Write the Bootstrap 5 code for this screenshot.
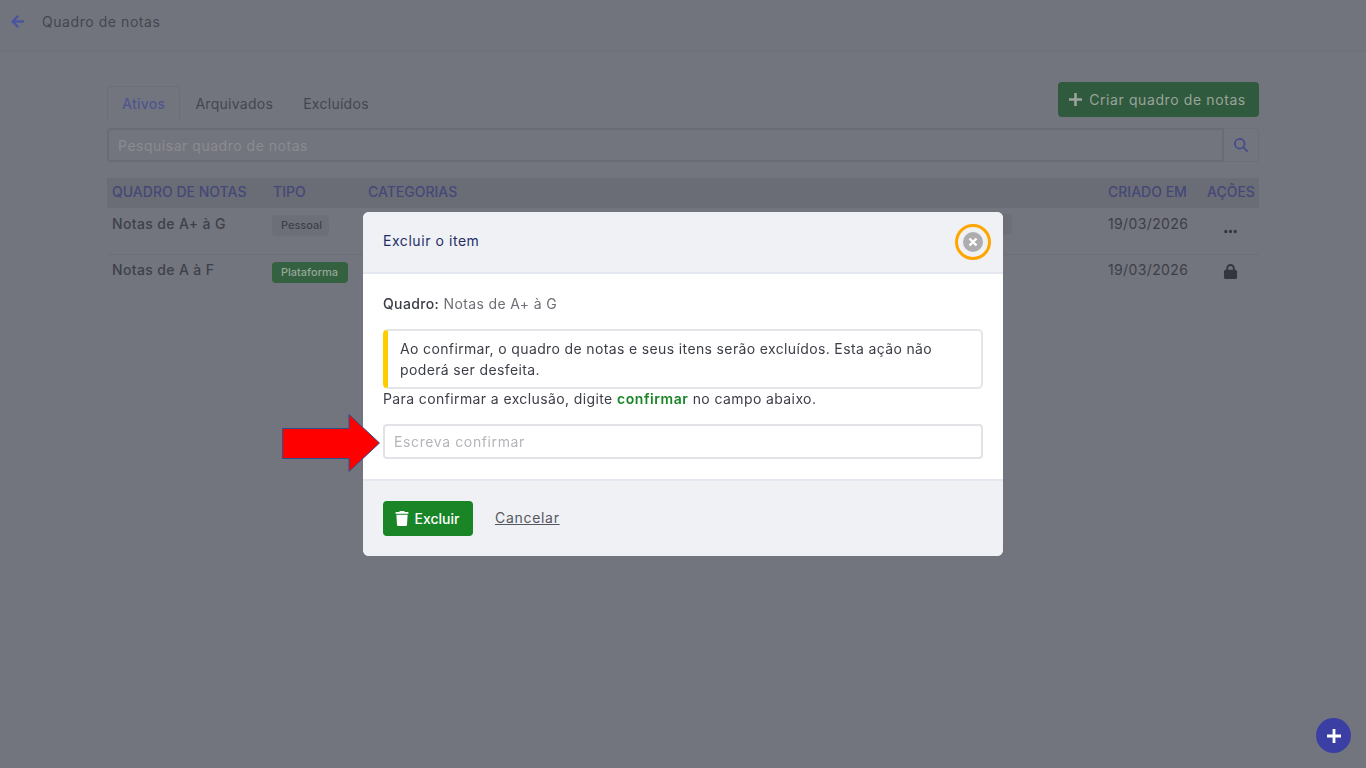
<!DOCTYPE html>
<html lang="pt-BR">
<head>
<meta charset="utf-8">
<title>Quadro de notas</title>
<link href="https://cdn.jsdelivr.net/npm/bootstrap@5.3.0/dist/css/bootstrap.min.css" rel="stylesheet">
<style>
    html, body { height: 100%; overflow: hidden; }
    body { background: #73757e; font-family: Inter, "Noto Sans", sans-serif; font-size: 14px; color: #3c3e48; letter-spacing: .026em; }
    .top-bar { height: 50px; padding: 0 0 8px 11px; gap: 18px; background: #72747d; box-shadow: 0 1px 3px rgba(0,0,0,.06); color: #44464f; letter-spacing: .04em; }
    .top-bar svg { width: 13px; height: 13px; fill: #4a55a0; }
    .board-wrap { width: 1152px; margin: 0 auto; }
    .tabs-row { padding-top: 32px; height: 78px; }
    .tab-items .nav-link { color: #44464f; height: 36px; padding: 6px 14px 0; margin: 4px 0 0; border: 1px solid transparent; border-bottom: 0; border-radius: 4px 4px 0 0; letter-spacing: .02em; }
    .tab-items .nav-link.active { color: #4f568f; background: transparent; border-color: #6d6f78; font-weight: 500; }
    .add-board, .add-board:hover { width: 201px; height: 35px; background: #305a3d; color: #9aa39c; border: 0; border-radius: 4px; font-size: 14px; gap: 7px; padding: 0 2px 0 0; letter-spacing: .043em; }
    .add-board svg { width: 13px; height: 13px; fill: #9aa39c; }
    .search-box { height: 34px; }
    .search-field { flex: 1; border: 2px solid #6a6c75; border-radius: 4px 0 0 4px; padding-left: 9px; color: #8a8b90; letter-spacing: .037em; }
    .search-btn { width: 35px; border: 1px solid #6d6f78; border-left: 0; border-radius: 0 4px 4px 0; }
    .search-btn svg { width: 14px; height: 14px; fill: #454c8c; }
    .board-table { margin-top: 16px; width: 1152px; table-layout: fixed; border-collapse: collapse; }
    .board-table th { height: 30px; padding: 0 5px 3px; background: #6b6d76; color: #444877; font-weight: 500; white-space: nowrap; letter-spacing: 0; }
    .board-table td { padding: 5px 5px 0; vertical-align: top; white-space: nowrap; overflow: visible; }
    .board-table .row-b td { padding-top: 4px; }
    .row-a { height: 46px; border-bottom: 1px solid #6d6f78; }
    .row-b { height: 31px; }
    .board-name { font-weight: 500; color: #3e404a; }
    .type-tag { display: inline-block; margin: 2px 0 0 -1px; padding: 0 9px; height: 21px; line-height: 20px; font-size: 11px; font-weight: 500; border-radius: 4px; letter-spacing: 0; }
    .type-tag.personal { background: #6d6f78; color: #3f414a; width: 57px; }
    .type-tag.platform { background: #34613f; color: #95a79a; width: 76px; margin-top: 3px; }
    .cat-tag { display: block; height: 21px; width: 644px; margin-top: 1px; background: #6d6f78; border-radius: 4px; }
    .act-cell { text-align: center; }
    .act-cell svg { fill: #33353f; width: 15px; height: 15px; }
    .act-dots { margin-top: 11px; }
    .act-lock { margin-top: 2px; }
    .del-dialog { width: 640px; max-width: 640px; margin: 212px 0 0 363px; }
    .del-dialog .modal-content { border: 0; border-radius: 6px; height: 344px; font-size: 14px; color: #3c3e48; }
    .del-head { height: 62px; padding: 0 20px; background: #f0f1f5; border-bottom: 2px solid #e4e7f0; border-radius: 6px 6px 0 0; }
    .del-title { color: #1f2f66; font-size: 14px; margin-bottom: 3px; letter-spacing: .04em; }
    .close-dot { width: 20px; height: 20px; border-radius: 50%; background: #adadb0; border: 0; padding: 0; }
    .close-dot svg { width: 10px; height: 10px; stroke: #fff; stroke-width: 2.4; }
    .del-body { padding: 19px 20px 0; height: 205px; flex: none; }
    .del-line { height: 21px; line-height: 21px; }
    .del-line strong { font-weight: 500; }
    .del-muted { color: #6d6f75; }
    .warn-box { height: 60px; margin-top: 15px; padding: 7px 16px 0 12px; line-height: 21px; border: 2px solid #e4e5e8; border-left: 5px solid #ffcc00; border-radius: 5px; }
    .confirm-line { letter-spacing: .028em; margin-top: -1px; margin-bottom: 1px; }
    .confirm-word { color: #198526; font-weight: 600; letter-spacing: .04em; }
    .confirm-field { height: 35px; margin-top: 15px; padding: 0 9px 1px; border: 2px solid #e2e3e6; border-radius: 4px; font-size: 14px; letter-spacing: .044em; }
    .confirm-field::placeholder { color: #b4b5ba; }
    .del-foot { height: 77px; padding: 0 20px; gap: 22px; background: #f0f1f5; border-top: 2px solid #e4e7f0; border-radius: 0 0 6px 6px; justify-content: flex-start; }
    .del-foot > * { margin: 0; }
    .del-btn, .del-btn:hover { width: 90px; height: 35px; padding: 0 2px 1px 0; gap: 6px; background: #198526; color: #fff; border: 0; border-radius: 4px; font-size: 14px; font-weight: 500; letter-spacing: 0; }
    .del-btn svg { width: 14px; height: 15px; fill: #fff; }
    .del-foot .cancel-link { color: #55575f; letter-spacing: .05em; margin-bottom: 2px; }
    .ring-mark { position: absolute; left: 955px; top: 224px; width: 36px; height: 36px; border: 3px solid #ffa500; border-radius: 50%; z-index: 1060; }
    .arrow-mark { position: absolute; left: 281px; top: 413px; width: 100px; height: 60px; z-index: 1060; }
    .fab-add { position: fixed; left: 1316px; top: 718px; width: 35px; height: 35px; padding: 0; border: 0; border-radius: 50%; background: #3b3fa3; z-index: 1060; }
    .fab-add svg { width: 14px; height: 14px; fill: #fff; }
</style>
</head>
<body>
    <div class="top-bar d-flex align-items-center">
        <svg viewBox="0 0 13 13"><path d="M6.300 0 8 1.700 4.400 5.300H13v2.400H4.400L8 11.300 6.300 13 0 6.500z"/></svg>
        <span>Quadro de notas</span>
    </div>

    <div class="board-wrap">
        <div class="tabs-row d-flex justify-content-between align-items-start">
            <ul class="nav tab-items">
                <li class="nav-item"><a class="nav-link active" href="#">Ativos</a></li>
                <li class="nav-item"><a class="nav-link" href="#">Arquivados</a></li>
                <li class="nav-item"><a class="nav-link" href="#">Excluídos</a></li>
            </ul>
            <button class="btn add-board d-flex align-items-center justify-content-center" type="button">
                <svg viewBox="0 0 13 13"><path d="M5.200 0h2.600v5.200H13v2.600H7.800V13H5.200V7.800H0V5.200h5.200z"/></svg>
                Criar quadro de notas
            </button>
        </div>
        <div class="search-box d-flex">
            <div class="search-field d-flex align-items-center">Pesquisar quadro de notas</div>
            <div class="search-btn d-flex align-items-center justify-content-center">
                <svg viewBox="0 0 512 512"><path d="M416 208c0 46-15 88-40 123l127 126a32 32 0 0 1-46 46L331 376A208 208 0 1 1 416 208zM208 352a144 144 0 1 0 0-288 144 144 0 0 0 0 288z"/></svg>
            </div>
        </div>
        <table class="board-table">
            <colgroup><col style="width:161px"><col style="width:95px"><col style="width:740px"><col style="width:99px"><col style="width:57px"></colgroup>
            <thead>
                <tr><th>QUADRO DE NOTAS</th><th>TIPO</th><th>CATEGORIAS</th><th>CRIADO EM</th><th>AÇÕES</th></tr>
            </thead>
            <tbody>
                <tr class="row-a">
                    <td class="board-name">Notas de A+ à G</td>
                    <td><span class="type-tag personal">Pessoal</span></td>
                    <td><span class="cat-tag"></span></td>
                    <td>19/03/2026</td>
                    <td class="act-cell"><svg class="act-dots" viewBox="0 0 448 512"><path d="M8 256a56 56 0 1 1 112 0 56 56 0 0 1-112 0zm160 0a56 56 0 1 1 112 0 56 56 0 0 1-112 0zm216-56a56 56 0 1 1 0 112 56 56 0 0 1 0-112z"/></svg></td>
                </tr>
                <tr class="row-b">
                    <td class="board-name">Notas de A à F</td>
                    <td><span class="type-tag platform">Plataforma</span></td>
                    <td></td>
                    <td>19/03/2026</td>
                    <td class="act-cell"><svg class="act-lock" viewBox="0 0 448 512"><path d="M144 144v48h160v-48a80 80 0 0 0-160 0zm-64 48v-48a144 144 0 0 1 288 0v48h16a64 64 0 0 1 64 64v192a64 64 0 0 1-64 64H64a64 64 0 0 1-64-64V256a64 64 0 0 1 64-64z"/></svg></td>
                </tr>
            </tbody>
        </table>
    </div>

    <div class="modal d-block">
        <div class="modal-dialog del-dialog">
            <div class="modal-content">
                <div class="modal-header del-head">
                    <h5 class="modal-title del-title fw-normal">Excluir o item</h5>
                    <button class="close-dot d-flex align-items-center justify-content-center" type="button" aria-label="Fechar">
                        <svg viewBox="0 0 10 10"><path d="M1.500 1.500l7 7M8.500 1.500l-7 7"/></svg>
                    </button>
                </div>
                <div class="modal-body del-body">
                    <div class="del-line"><strong>Quadro:</strong> <span class="del-muted">Notas de A+ à G</span></div>
                    <div class="warn-box">Ao confirmar, o quadro de notas e seus itens serão excluídos. Esta ação não poderá ser desfeita.</div>
                    <div class="del-line confirm-line">Para confirmar a exclusão, digite <span class="confirm-word">confirmar</span> no campo abaixo.</div>
                    <input class="form-control confirm-field" type="text" placeholder="Escreva confirmar">
                </div>
                <div class="modal-footer del-foot">
                    <button class="btn del-btn d-flex align-items-center justify-content-center" type="button">
                        <svg viewBox="0 0 448 512"><path d="M135 18C140 7 151 0 163 0h122c12 0 23 7 28 18l7 14h96a32 32 0 0 1 0 64H32a32 32 0 0 1 0-64h96zM32 128h384l-21 339a48 48 0 0 1-48 45H101a48 48 0 0 1-48-45z"/></svg>
                        Excluir
                    </button>
                    <a class="cancel-link" href="#">Cancelar</a>
                </div>
            </div>
        </div>
    </div>

    <div class="ring-mark"></div>
    <svg class="arrow-mark" viewBox="0 0 100 60"><path d="M1.500 15.500H68V1.500L98.500 30 68 58.500V45.500H1.500z" fill="#ff0000" stroke="#2f528f" stroke-width="1"/></svg>

    <button class="fab-add d-flex align-items-center justify-content-center" type="button" aria-label="Adicionar">
        <svg viewBox="0 0 13 13"><path d="M5.200 0h2.600v5.200H13v2.600H7.800V13H5.200V7.800H0V5.200h5.200z"/></svg>
    </button>

    <script src="https://cdn.jsdelivr.net/npm/bootstrap@5.3.0/dist/js/bootstrap.bundle.min.js"></script>
</body>
</html>
